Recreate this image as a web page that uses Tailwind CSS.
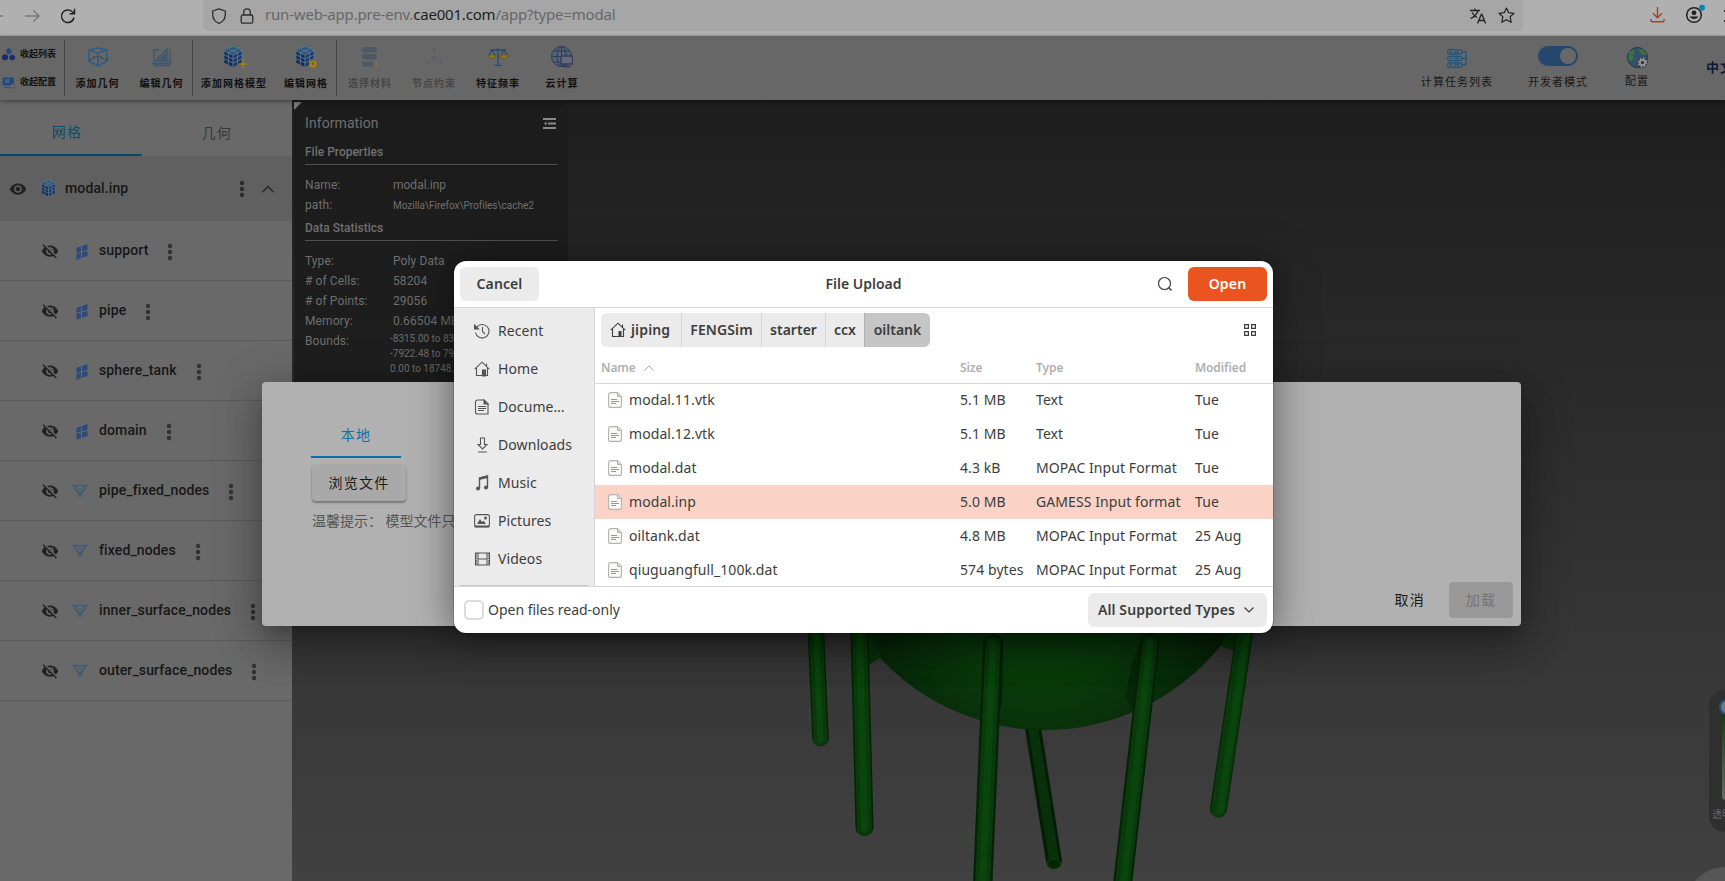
<!DOCTYPE html>
<html lang="zh">
<head>
<meta charset="utf-8">
<title>modal</title>
<script src="https://cdn.jsdelivr.net/npm/@tailwindcss/browser@4"></script>
</head>
<body class="relative w-[1725px] h-[881px] overflow-hidden bg-[#222] font-[Roboto,'Noto_Sans_CJK_SC',sans-serif]">

<svg class="hidden">
  <symbol id="cube" viewBox="0 0 24 24">
    <path d="M12 1 22 5 12 10 2 5Z" fill="#2c5580"/><path d="M2 5 12 10V23L2 18Z" fill="#162c54"/><path d="M22 5 12 10V23L22 18Z" fill="#1c3866"/>
    <path d="M7 3 17 7.500M17 3 7 7.500M2 5 12 10 22 5M2 5V18M7 7.500V20.500M12 10V23M17 7.500V20.500M22 5V18M2 9.300 12 14.300 22 9.300M2 13.600 12 18.600 22 13.600" stroke="#5f7a94" stroke-width="1" fill="none"/>
    <path d="M5 2.500 12 0 19 2.500M1 5 3 5.800M23 5 21 5.800" stroke="#3f7d92" stroke-width="1.200" fill="none"/>
  </symbol>
  <symbol id="eye" viewBox="0 0 24 24"><path d="M12 9a3 3 0 1 0 0 6 3 3 0 0 0 0-6m0 8a5 5 0 1 1 0-10 5 5 0 0 1 0 10m0-12.500C7 4.500 2.730 7.610 1 12c1.730 4.390 6 7.500 11 7.500s9.270-3.110 11-7.500c-1.730-4.390-6-7.500-11-7.500"/></symbol>
  <symbol id="eyeoff" viewBox="0 0 24 24"><path d="M11.830 9 15 12.160V12a3 3 0 0 0-3-3zm-4.300.8 1.550 1.550c-.05.21-.08.42-.08.65a3 3 0 0 0 3 3c.22 0 .44-.03.65-.08l1.550 1.550c-.67.33-1.410.53-2.200.53a5 5 0 0 1-5-5c0-.79.2-1.530.53-2.200M2 4.270l2.280 2.280.45.45C3.080 8.300 1.780 10 1 12c1.730 4.390 6 7.500 11 7.500 1.550 0 3.030-.3 4.380-.84l.43.42L19.730 22 21 20.730 3.270 3M12 7a5 5 0 0 1 5 5c0 .64-.13 1.260-.36 1.820l2.930 2.930c1.500-1.250 2.700-2.890 3.430-4.750-1.730-4.390-6-7.500-11-7.500-1.400 0-2.740.25-4 .7l2.170 2.150C10.740 7.130 11.350 7 12 7"/></symbol>
  <symbol id="dots" viewBox="0 0 6 18"><circle cx="3" cy="3" r="2.200"/><circle cx="3" cy="9" r="2.200"/><circle cx="3" cy="15" r="2.200"/></symbol>
  <symbol id="surf" viewBox="0 0 12 16"><path d="M.5 4 5 2.300V7.500L.5 9ZM6 2 11.500 0V5.700L6 7.200ZM.5 10 5 8.600V14L.5 15.900ZM6 8.300 11.500 6.700V12L6 13.700Z" fill="#2f4a78"/></symbol>
  <symbol id="nodes" viewBox="0 0 16 14"><path d="M1 1.500H15L8 12.500ZM1 1.500 8 5 15 1.500M8 5V12.500M4.500 5 8 12.500 11.500 5" fill="none" stroke="#38556e" stroke-width=".9"/><circle cx="1.200" cy="1.500" r="1.200" fill="#396c84"/><circle cx="14.800" cy="1.500" r="1.200" fill="#396c84"/><circle cx="8" cy="12.500" r="1.300" fill="#396c84"/><circle cx="8" cy="5" r="1.200" fill="#396c84"/></symbol>
  <symbol id="home" viewBox="0 0 16 16"><path d="M.7 8.200 8 1.200 15.300 8.200M2.500 7V14.500H9.500M11.500 14.500H13.500V7M12.500 2.500V5.500" fill="none" stroke="currentColor" stroke-width="1.100"/><path d="M8.500 9h3v6h-3z" fill="currentColor"/></symbol>
  <symbol id="file" viewBox="0 0 14 16"><path d="M2.500.6H9.500L13.400 4.500V13.400a2 2 0 0 1-2 2H2.600a2 2 0 0 1-2-2V2.600a2 2 0 0 1 1.900-2Z" fill="#fafafa" stroke="#b5b2b0" stroke-width="1.100"/><path d="M9.500.8V4.500H13.300" fill="#ddd" stroke="#b5b2b0"/><path d="M3 7.500H9M3 9.500H11M3 11.500H8" stroke="#999694" stroke-width="1"/></symbol>
</svg>

<div class="flex flex-col h-full">
  <!-- browser bar -->
  <header class="h-9 shrink-0 bg-[#b0b0b0] border-b border-[#9c9c9c] flex items-start text-[#222]">
    <div class="w-[203px] h-[31px] flex items-center">
      <svg class="w-[3px] h-4 mr-[21px]" viewBox="0 0 3 16"><path d="M0 8H3" stroke="#777" stroke-width="1.500"/></svg>
      <svg class="w-4 h-4 mr-[20px]" viewBox="0 0 16 16" fill="none" stroke="#777" stroke-width="1.400"><path d="M1 8H15M9.500 2.500 15 8 9.500 13.500"/></svg>
      <svg class="w-4 h-4" viewBox="0 0 16 16" fill="none" stroke="#222" stroke-width="1.500"><path d="M14 9.500A6.300 6.300 0 1 1 12 3.500L14.300 5.500M14.500.8V5.700H9.600"/></svg>
    </div>
    <div class="w-[1320px] h-[31px] bg-[#a6a6a6] rounded-b-[5px] flex items-center pl-2">
      <svg class="w-4 h-4 mr-[13px]" viewBox="0 0 16 16" fill="none" stroke="#2d2d2d" stroke-width="1.300"><path d="M8 .8 14.300 3V6.500C14.300 11 11.500 14 8 15.400 4.500 14 1.700 11 1.700 6.500V3Z" stroke-linejoin="round"/></svg>
      <svg class="w-[14px] h-4" viewBox="0 0 14 16" fill="none" stroke="#2d2d2d" stroke-width="1.300"><rect x="1.200" y="7" width="11.600" height="8.200" rx="1.500"/><path d="M3.700 7V4.200a3.300 3.300 0 0 1 6.600 0V7"/></svg>
      <span class="ml-[11px] -mt-0.5 font-['Noto_Sans'] text-[15px] leading-none tracking-[-0.190px] text-[#676767] whitespace-pre">run-web-app.pre-env.<span class="text-[#222]">cae001.com</span>/app?type=modal</span>
      <svg class="w-4 h-4 ml-auto mr-3" viewBox="0 0 16 16" fill="none" stroke="#222" stroke-width="1.300"><path d="M0 2.500H10M5 .5V2.500M8 2.500C7 6 4 9 .5 10.500M2.200 4.500C3.500 7 5 8.500 7 9.500M7.500 15.500 11.300 6.500H12L15.600 15.500M8.800 12.500H14.400"/></svg>
      <svg class="w-[17px] h-[17px] mr-2" viewBox="0 0 17 17" fill="none" stroke="#222" stroke-width="1.200" stroke-linejoin="round"><path d="M8.500 1 10.700 5.700 16 6.300 12.100 9.900 13.200 15.300 8.500 12.700 3.800 15.300 4.900 9.900 1 6.300 6.300 5.700Z"/></svg>
    </div>
    <div class="flex-1 h-[31px] flex items-center">
      <svg class="w-[15px] h-4 ml-[127px] -mt-0.5" viewBox="0 0 15 16" fill="none" stroke="#a9401c" stroke-width="1.400"><path d="M7.500 0V10.500M3 6.300 7.500 10.700 12 6.300M1 12V13.500a1.300 1.300 0 0 0 1.300 1.300H12.700A1.300 1.300 0 0 0 14 13.500V12"/></svg>
      <svg class="w-[20px] h-5 ml-[21px] -mt-1" viewBox="0 0 20 20"><circle cx="8" cy="11" r="7.300" fill="none" stroke="#222" stroke-width="1.500"/><circle cx="8" cy="8.800" r="2.400" fill="#222"/><path d="M3.700 12.500H12.300C11.500 15.700 4.500 15.700 3.700 12.500Z" fill="#222"/><circle cx="16" cy="3.800" r="3" fill="#0a86ad"/></svg>
      <div class="ml-auto w-px h-3 border-y-2 border-[#222]"></div>
    </div>
  </header>

  <!-- app toolbar -->
  <nav class="h-16 shrink-0 bg-[#676767] flex relative z-10 shadow-[0_2px_4px_rgba(0,0,0,.35)] text-[#101010] whitespace-nowrap">
    <div class="w-16 flex flex-col pt-[8px] gap-[8px] text-[9px] font-bold leading-none">
      <div class="h-5 flex items-center gap-[5px] pl-0.5"><svg class="w-[13px] h-[13px]" viewBox="0 0 13 13"><path d="M6.500 0 9.500 1.500V5L6.500 6.500 4.500 5V1.500Z" fill="#2c4578"/><path d="M3 6 6 7.500V11L3 12.500 0 11V7.500Z" fill="#1a2c60"/><path d="M10 6.500 13 8V11L10 12.500 7.500 11V8Z" fill="#1b2e66"/></svg>收起列表</div>
      <div class="h-5 flex items-center gap-[5px] pl-0.5"><svg class="w-[13px] h-[13px]" viewBox="0 0 13 13"><rect x=".5" y="1.500" width="11.500" height="8" rx="1" fill="#234a7d"/><path d="M3 4H8M3 6H7" stroke="#54779c"/><path d="M2 11.500H8" stroke="#3b4f6c"/><circle cx="10.500" cy="10" r="2" fill="#777" stroke="#3d4a60"/></svg>收起配置</div>
    </div>
    <div class="w-px h-[56px] mt-1 bg-[#444]"></div>
    <div id="tools" class="flex text-[10px] font-bold tracking-[1.050px]"></div>
    <div class="ml-auto flex text-[11px] tracking-[1.050px] text-[#181818]">
      <div class="w-[74px] mr-[33px] flex flex-col items-center"><svg class="w-5 h-[19px] mt-[13px]" viewBox="0 0 20 19" fill="none" stroke="#265478" stroke-width="1.300"><rect x=".7" y=".7" width="14" height="4.300" rx="1.500"/><rect x=".7" y="7.300" width="14" height="4.300" rx="1.500"/><rect x=".7" y="14" width="14" height="4.300" rx="1.500"/><path d="M15 3H19V16H15M15 9.500H19M3 3h2M7 3h5M3 9.500h2M7 9.500h5M3 16h2M7 16h5"/></svg><span class="mt-[7px] leading-4">计算任务列表</span></div>
      <div class="w-[62px] mr-[35px] flex flex-col items-center"><div class="w-10 h-5 mt-[10px] rounded-full bg-[#24466f] flex justify-end items-center pr-0.5"><div class="w-4 h-4 rounded-full bg-[#686868]"></div></div><span class="mt-[9px] leading-4">开发者模式</span></div>
      <div class="w-[26px] mr-[56px] flex flex-col items-center"><svg class="w-[21px] h-[21px] mt-[11px]" viewBox="0 0 21 21"><circle cx="10.500" cy="10.500" r="10" fill="#35506a" stroke="#26333f"/><path d="M2 5 7 2 8 5 6 8 7 12 4 14 1 12ZM11 1.500 17 3 20 8 16 8 13 6Z" fill="#3d6f4a"/><circle cx="15.500" cy="15.500" r="5.200" fill="#3a3d48"/><circle cx="15.500" cy="15.500" r="3.800" fill="none" stroke="#999" stroke-width="1.800" stroke-dasharray="1.700 1.280"/><circle cx="15.500" cy="15.500" r="2.600" fill="none" stroke="#999" stroke-width="1.500"/></svg><span class="mt-[6px] leading-4">配置</span></div>
      <div class="w-[19px] overflow-hidden pt-[22px] text-[13px] leading-5 font-bold text-[#0c1a38]">中文</div>
    </div>
  </nav>

  <div class="flex flex-1 min-h-0">
    <!-- model tree -->
    <aside class="w-[292px] shrink-0 bg-[#696969] flex flex-col text-[14px] font-medium text-[#171717] tracking-[0.120px]">
      <div class="h-14 flex font-normal tracking-[1.250px] leading-none">
        <div class="w-[142px] border-b-2 border-[#0d4766] text-[#0d4a69] flex items-center justify-center pt-[10px] pr-2">网格</div>
        <div class="flex-1 text-[#383838] flex items-center justify-center pt-[10px]">几何</div>
      </div>
      <div class="h-[65px] bg-[#606060] flex items-center pl-[9px]">
        <svg class="w-[18px] h-[18px]" fill="#222"><use href="#eye"/></svg>
        <svg class="w-[17px] h-[17px] ml-[13px]"><use href="#cube"/></svg>
        <span class="ml-2">modal.inp</span>
        <svg class="w-[6px] h-[18px] ml-auto mr-[17px]" fill="#2b2b2b"><use href="#dots"/></svg>
        <svg class="w-3 h-2 mr-[18px]" viewBox="0 0 12 8" fill="none" stroke="#2b2b2b" stroke-width="1.800"><path d="M.7 7 6 1.500 11.300 7"/></svg>
      </div>
      <div id="tree"></div>
    </aside>

    <!-- viewport -->
    <main class="relative flex-1 overflow-hidden bg-linear-to-b from-[#1e1e1e] to-[#414141]">
      <svg class="absolute inset-0" width="1433" height="781" viewBox="292 100 1433 781">
        <defs>
          <radialGradient id="ball" gradientUnits="userSpaceOnUse" cx="1040" cy="600" r="215"><stop offset="0" stop-color="#0a400b"/><stop offset=".4" stop-color="#0a3b0b"/><stop offset=".75" stop-color="#082a09"/><stop offset="1" stop-color="#061b07"/></radialGradient>
        </defs>
        <g stroke-linecap="round" fill="none">
          <path d="M1031 715 1054 861" stroke="#051d06" stroke-width="16"/><path d="M1031 715 1054 859" stroke="#08300a" stroke-width="10"/>
          <ellipse cx="1054" cy="864" rx="7" ry="5" fill="#062407" stroke="#0a4a0d"/>
          <path d="M815 610 820.500 738" stroke="#052206" stroke-width="16.500"/><path d="M815 610 820.500 739" stroke="#09390b" stroke-width="14"/><path d="M815 610 820.500 740" stroke="#0b440e" stroke-width="6"/>
        </g>
        <circle cx="1045" cy="505" r="225" fill="url(#ball)"/>
        <path d="M868 625 882 657 868 665Z" fill="#08310a"/><path d="M1220 646 1236 651 1245 620 1232 620Z" fill="#08310a"/>
        <path d="M995 640 1003 640 1002 702 998 716Z" fill="#06200a"/><path d="M1140 640 1132 665 1125 698 1134 710Z" fill="#072709"/>
        <g stroke-linecap="round" fill="none">
          <g stroke="#052206" stroke-width="18"><path d="M859 610 864.500 827"/><path d="M993 644 982 900" stroke-width="19.500"/><path d="M1150 643 1123 880" stroke-width="19"/><path d="M1245 630 1218.500 809" stroke-width="17"/></g>
          <g stroke="#093a0b" stroke-width="15"><path d="M859 610 864.500 828"/><path d="M993 644 982 900"/><path d="M1150 643 1123 880"/><path d="M1245 630 1218.500 810"/></g>
          <g stroke="#0b450e" stroke-width="7"><path d="M859 610 864.500 829"/><path d="M993 644 982 900"/><path d="M1150 643 1124 880"/><path d="M1247 630 1220 811"/></g>
        </g>
      </svg>
      <section class="absolute left-0.5 top-0.5 w-[274px] h-[300px] rounded-xl bg-[#1b1b1b]/80 px-[11px] pr-[10px] text-[12px] leading-5 text-[#6f6f6f]">
        <div class="absolute left-0 top-0 border-t-8 border-t-[#777] border-r-8 border-r-transparent"></div>
        <div class="flex items-center justify-between text-[14px] h-[42px] tracking-[0.080px]">Information
          <svg class="w-[13px] h-[11px] mr-0.5" viewBox="0 0 13 11" stroke="#8a8a8a" stroke-width="2"><path d="M0 1H13M5 5.500H13M0 10H13"/><path d="M3.500 3.500 1 5.500 3.500 7.500Z" fill="#8a8a8a" stroke="none"/></svg></div>
        <div class="font-medium h-[21px] border-b border-[#505050]"><span class="relative -top-0.5">File Properties</span></div>
        <div class="grid grid-cols-[88px_1fr] auto-rows-[20px] mt-[10px] tracking-[0.1px]"><span>Name:</span><span class="tracking-normal">modal.inp</span><span>path:</span><span class="pt-px text-[10px] tracking-[-0.020px]">Mozilla\Firefox\Profiles\cache2</span></div>
        <div class="font-medium h-[26px] pt-[3px] border-b border-[#505050]">Data Statistics</div>
        <div class="grid grid-cols-[88px_1fr] mt-[10px] tracking-[0.1px]"><span>Type:</span><span>Poly Data</span><span># of Cells:</span><span>58204</span><span># of Points:</span><span>29056</span><span>Memory:</span><span>0.66504 MB</span><span>Bounds:</span><div class="-ml-[3px] text-[10px] leading-[15px] tracking-normal whitespace-nowrap"><p>-8315.00 to 8315.00</p><p>-7922.48 to 7922.48</p><p>0.00 to 18748.00</p></div></div>
      </section>
      <div class="absolute left-[1417px] top-[590px] w-9 h-[142px] rounded-[15px] bg-[#2f2f2f]">
        <div class="absolute left-[13px] top-5 w-4 h-[90px] rounded-b bg-linear-to-b from-[#0a3a0b] to-[#6a6a6a]"></div>
        <div class="absolute left-[10px] top-[9px] w-4 h-4 rounded-full bg-[#777] border-2 border-[#24507f]"></div>
        <span class="absolute left-[3px] top-[117px] text-[10px] leading-4 text-[#666] whitespace-nowrap">透明度</span>
      </div>
      <div class="absolute left-[1394px] top-[767px] w-[78px] h-[78px] rounded-full bg-[#565656]"></div>
    </main>
  </div>
</div>

<!-- upload dialog of the app -->
<section class="absolute z-20 left-[262px] top-[382px] w-[1259px] h-[244px] rounded bg-[#b1b1b1] shadow-[0_11px_15px_-7px_rgba(0,0,0,.2),0_24px_38px_3px_rgba(0,0,0,.14),0_9px_46px_8px_rgba(0,0,0,.2)] flex flex-col items-start pl-[49px] pr-2 pb-2 text-[14px]">
  <div class="w-[90px] h-[76px] border-b-2 border-[#0871a5] text-[#0871a5] flex items-end justify-center pb-[11px] leading-5 tracking-[1.250px]">本地</div>
  <div class="ml-px mt-[7px] h-9 w-[94px] justify-center rounded bg-[#a9a9a9] shadow-[0_2px_2px_rgba(0,0,0,.3),0_0_2px_rgba(0,0,0,.15)] flex items-center tracking-[1.250px] text-[#1a1a1a]">浏览文件</div>
  <p class="ml-px mt-[10px] leading-5 text-[#555] whitespace-pre">温馨提示： 模型文件只支持</p>
  <div class="mt-auto self-end flex items-center tracking-[1.250px] text-[#1a1a1a] leading-none">
    <span class="mr-6">取消</span><span class="w-16 h-9 rounded bg-[#999] text-[#737373] flex items-center justify-center">加载</span>
  </div>
</section>

<!-- system file chooser -->
<section class="absolute z-30 left-[454px] top-[261px] w-[819px] h-[372px] rounded-[12px] overflow-hidden bg-white shadow-[0_3px_40px_rgba(0,0,0,.5),0_0_0_1px_rgba(0,0,0,.15)] flex flex-col font-['Noto_Sans'] text-[14px] leading-none text-[#3d3d3d] whitespace-nowrap">
  <header class="h-[47px] border-b border-[#d8d8d8] shrink-0 grid grid-cols-[1fr_auto_1fr] items-start px-1.5 pt-1.5 font-semibold">
    <span class="w-[79px] h-[34px] rounded-md bg-[#ebebeb] flex items-center justify-center tracking-[0.1px]">Cancel</span>
    <span class="h-[34px] flex items-center">File Upload</span>
    <span class="justify-self-end flex items-center gap-[15px]">
      <svg class="w-4 h-4" viewBox="0 0 16 16" fill="none" stroke="#3d3d3d" stroke-width="1.200"><circle cx="7.500" cy="7.500" r="6"/><path d="M11.800 11.800 14.500 14.500" stroke-width="1.500"/></svg>
      <span class="w-[79px] h-[34px] rounded-md bg-[#e95420] text-white flex items-center justify-center tracking-[0.2px]">Open</span>
    </span>
  </header>
  <div class="flex h-[278px] shrink-0">
    <nav id="places" class="w-[141px] border-r border-[#d5d5d5] bg-[#ebebeb] pt-1 shrink-0 tracking-[0.080px]"></nav>
    <div class="flex-1 flex flex-col">
      <div class="flex shrink-0 items-start justify-between pl-1.5 pr-[17px] pt-[5px] h-[42px]">
        <div class="flex h-[34px] rounded-md overflow-hidden bg-[#ebebeb] font-semibold">
          <span class="w-[81px] border-r border-[#d5d5d5] flex items-center pl-[9px] gap-[5px] tracking-[0.150px]"><svg class="w-4 h-4"><use href="#home"/></svg>jiping</span>
          <span class="w-[80px] border-r border-[#d5d5d5] flex items-center justify-center tracking-[0.1px]">FENGSim</span>
          <span class="w-[64px] border-r border-[#d5d5d5] flex items-center justify-center">starter</span>
          <span class="w-[38px] flex items-center justify-center">ccx</span>
          <span class="w-[66px] border-l border-[#b0b0b0] bg-[#c5c5c5] flex items-center justify-center">oiltank</span>
        </div>
        <svg class="w-3 h-3 mt-[11px]" viewBox="0 0 12 12" fill="none" stroke="#3d3d3d" stroke-width="1.200"><path d="M.6.6H4.400V4.400H.6ZM7.600.6H11.400V4.400H7.600ZM.6 7.600H4.400V11.400H.6ZM7.600 7.600H11.400V11.400H7.600Z"/></svg>
      </div>
      <div class="relative shrink-0 h-[34px] -mb-px pt-0.5 border-b border-[#d8d8d8] grid grid-cols-[359px_76px_159px_1fr] items-center pl-1.5 text-[12px] font-semibold text-[#b0b0b0] tracking-[-0.1px]">
        <span class="flex items-center gap-2">Name <svg class="w-[10px] h-[6px]" viewBox="0 0 10 6" fill="none" stroke="#b0b0b0"><path d="M.5 5.500 5 1 9.500 5.500"/></svg></span><span>Size</span><span>Type</span><span>Modified</span>
      </div>
      <div id="files" class="tracking-[0.080px]"></div>
    </div>
  </div>
  <footer class="flex-1 border-t border-[#d8d8d8] flex items-center justify-between pl-[10px] pr-1.5">
    <span class="flex items-center gap-1 tracking-[-0.020px]"><i class="w-5 h-5 rounded-[5px] border-2 border-[#dcdcdc]"></i>Open files read-only</span>
    <span class="w-[179px] h-[34px] rounded-md bg-[#ebebeb] font-semibold flex items-center justify-center gap-[9px] tracking-[0.080px]"><span class="-ml-[3px]">All Supported Types</span><svg class="w-[10px] h-[6px]" viewBox="0 0 10 6" fill="none" stroke="#3d3d3d" stroke-width="1.200"><path d="M.5.5 5 5 9.500.5"/></svg></span>
  </footer>
</section>

<script>
const cube = '<svg class="w-[22px] h-[22px]"><use href="#cube"/></svg>';
const tools = [
  ['添加几何', 'w-[61px] ml-[2px]', '<svg class="w-5 h-5" viewBox="0 0 20 20" fill="none" stroke="#2f5d88" stroke-width="1.600"><path d="M1 3 10 1 19 3V14L10 19 1 14ZM1 3 10 6 19 3M10 6V19"/><path d="M1 13 8 10M19 13 12 10M5 10H15" stroke="#263a52" stroke-dasharray="2 1.500" stroke-width="1"/></svg>'],
  ['编辑几何', 'w-[61px] ml-[3px]', '<svg class="w-5 h-5" viewBox="0 0 20 20" fill="none" stroke="#3d556e" stroke-width="1.300"><path d="M7 3H2V14H18V3H17M5 12 15 2V12ZM10 10 13 7V10ZM1 16.500H19L17 18.500H3Z"/></svg>'],
  ['', 'w-px h-[56px] mt-1 -mr-px bg-[#444]', ''],
  ['添加网格模型', 'w-[84px]', '<div class="relative -ml-[3px]">' + cube + '<svg class="absolute -right-[3px] bottom-0 w-2 h-2" viewBox="0 0 8 8"><path d="M4 0V8M0 4H8" stroke="#a87c10" stroke-width="1.600"/></svg></div>'],
  ['编辑网格', 'w-[60px]', '<div class="relative -ml-[3px]">' + cube + '<svg class="absolute -right-px bottom-0 w-2 h-2" viewBox="0 0 8 8"><circle cx="4" cy="4" r="2.600" fill="none" stroke="#a8830c" stroke-width="2.400"/></svg></div>'],
  ['', 'w-px h-[56px] mt-1 mr-px bg-[#444]', ''],
  ['选择材料', 'w-[64px] text-[#464646]', '<svg class="w-5 h-5" viewBox="0 0 20 20" fill="#4f5763"><rect x="2" y="0" width="15" height="5.500" rx="2.700"/><rect x="2" y="7" width="15" height="5.500" rx="2.700"/><path d="M2 14C5 15.500 9 15.500 13 14.500V19.500H5A3 3 0 0 1 2 17Z"/><path d="M16.500 14V20M13.500 17H19.500" stroke="#776f55" stroke-width="1.200"/></svg>'],
  ['节点约束', 'w-[64px] text-[#464646]', '<svg class="w-5 h-5" viewBox="0 0 20 20" fill="none" stroke="#5d6064" stroke-width="1.100"><path d="M10 2V11L3 16M10 11 17 16"/><circle cx="10" cy="11" r="1.200"/><path d="M8 4 10 2 12 4M3 13V16H6M17 13V16H14"/></svg>'],
  ['特征频率', 'w-[64px]', '<svg class="w-5 h-5" viewBox="0 0 20 20" fill="none" stroke="#294b6d" stroke-width="1.300"><path d="M2 3H18M10 1V18M6 18.300H14M4 3 1 8M4 3 7 8M16 3 13 8M16 3 19 8"/><path d="M.3 8H7.700A3.700 3.700 0 0 1 .3 8ZM12.300 8H19.700A3.700 3.700 0 0 1 12.300 8Z" fill="#94760e" stroke="#5a5428" stroke-width=".7"/></svg>'],
  ['云计算', 'w-[64px]', '<svg class="w-[22px] h-[22px]" viewBox="0 0 22 22" fill="none" stroke="#2d3d58" stroke-width="1"><circle cx="10.500" cy="10.500" r="10" fill="#566378"/><ellipse cx="10.500" cy="10.500" rx="4.500" ry="10"/><path d="M.5 10.500H20M2 5H19M2 16H12M10.500.5V20"/><rect x="10" y="10" width="11.500" height="8" rx="1" fill="#676a7c" stroke="#393a5c" stroke-width="1.500"/><path d="M12 20.500H20" stroke="#393a5c" stroke-width="1.500"/></svg>'],
];
document.getElementById('tools').innerHTML = tools.map(([name, cls, icon]) => name
  ? `<div class="${cls} flex flex-col items-center"><div class="h-[22px] mt-[10px] flex items-center">${icon}</div><span class="mt-[8px] leading-4">${name}</span></div>`
  : `<div class="${cls}"></div>`).join('');

document.getElementById('tree').innerHTML = [['support','surf'],['pipe','surf'],['sphere_tank','surf'],['domain','surf'],['pipe_fixed_nodes','nodes'],['fixed_nodes','nodes'],['inner_surface_nodes','nodes'],['outer_surface_nodes','nodes']].map(([n, ic]) =>
  `<div class="h-[60px] border-b border-[#5b5b5b] flex items-center pl-[41px]"><svg class="w-[18px] h-[18px]" fill="#222"><use href="#eyeoff"/></svg><svg class="${ic === 'surf' ? 'w-3 h-4 ml-[17px] mr-[11px] mt-0.5' : 'w-4 h-[14px] ml-[13px] mr-[11px]'}"><use href="#${ic}"/></svg><span>${n}</span><svg class="w-[6px] h-[18px] ml-[19px] mt-0.5" fill="#333"><use href="#dots"/></svg></div>`).join('');

const places = [
  ['Recent', '<path d="M2.500 4.500A6.800 6.800 0 1 1 1.500 9.500M8.500 4V8.500L11 11"/><path d="M.5 2V6H4.500Z" fill="currentColor"/>'],
  ['Home', '<use href="#home"/>'],
  ['Docume…', '<path d="M3.500 1H10L14 5V15H3.500A2 2 0 0 1 1.500 13V3A2 2 0 0 1 3.500 1ZM4 7.500H12M4 9.500H12M4 11.500H10"/><path d="M10 1V5H14Z" fill="currentColor"/>'],
  ['Downloads', '<path d="M6.500 1H10.500V7.500H13L8.500 12 4 7.500H6.500ZM4 15H13"/>'],
  ['Music', '<path d="M5.500 13V3L13.500 1V12" stroke-width="1.400"/><path d="M5 2.500 14 .5V3L5 5Z" fill="currentColor" stroke="none"/><circle cx="4" cy="13.500" r="2" fill="currentColor" stroke="none"/><circle cx="12" cy="12.500" r="2" fill="currentColor" stroke="none"/>'],
  ['Pictures', '<rect x=".6" y="1.600" width="14.800" height="12" rx="2"/><path d="M.6 13.500H15.400" stroke-width="2"/><path d="M3 11 6 6 8 9 9.500 7.500 12 11Z" fill="currentColor" stroke="none"/><circle cx="11.500" cy="5" r="1.500" fill="currentColor" stroke="none"/>'],
  ['Videos', '<path d="M1.500 2H15.500V14H1.500ZM4 2V14M13 2V14M4 8H13"/><path d="M2.200 2V14M14.800 2V14" stroke-width="1.500" stroke-dasharray="1.200 1.200"/>'],
];
document.getElementById('places').innerHTML = places.map(([n, p]) =>
  `<div class="h-[38px] flex items-center pl-5 gap-2"><svg class="w-4 h-4 text-[#555]" viewBox="0 0 16 16" fill="none" stroke="currentColor" stroke-width="1.100">${p}</svg>${n}</div>`).join('') +
  '<div class="mx-1.5 mt-[7px] h-px bg-[#c8c8c8]"></div>';

document.getElementById('files').innerHTML = [
  ['modal.11.vtk','5.1 MB','Text','Tue'],['modal.12.vtk','5.1 MB','Text','Tue'],['modal.dat','4.3 kB','MOPAC Input Format','Tue'],
  ['modal.inp','5.0 MB','GAMESS Input format','Tue'],['oiltank.dat','4.8 MB','MOPAC Input Format','25 Aug'],['qiuguangfull_100k.dat','574 bytes','MOPAC Input Format','25 Aug']
].map((r, i) => `<div class="h-[34px] grid grid-cols-[352px_76px_159px_1fr] items-center pl-[13px] ${i === 3 ? 'bg-[#fad3c6]' : ''}"><span class="flex items-center gap-[7px]"><svg class="w-[14px] h-4"><use href="#file"/></svg>${r[0]}</span><span>${r[1]}</span><span>${r[2]}</span><span>${r[3]}</span></div>`).join('');
</script>
</body>
</html>
